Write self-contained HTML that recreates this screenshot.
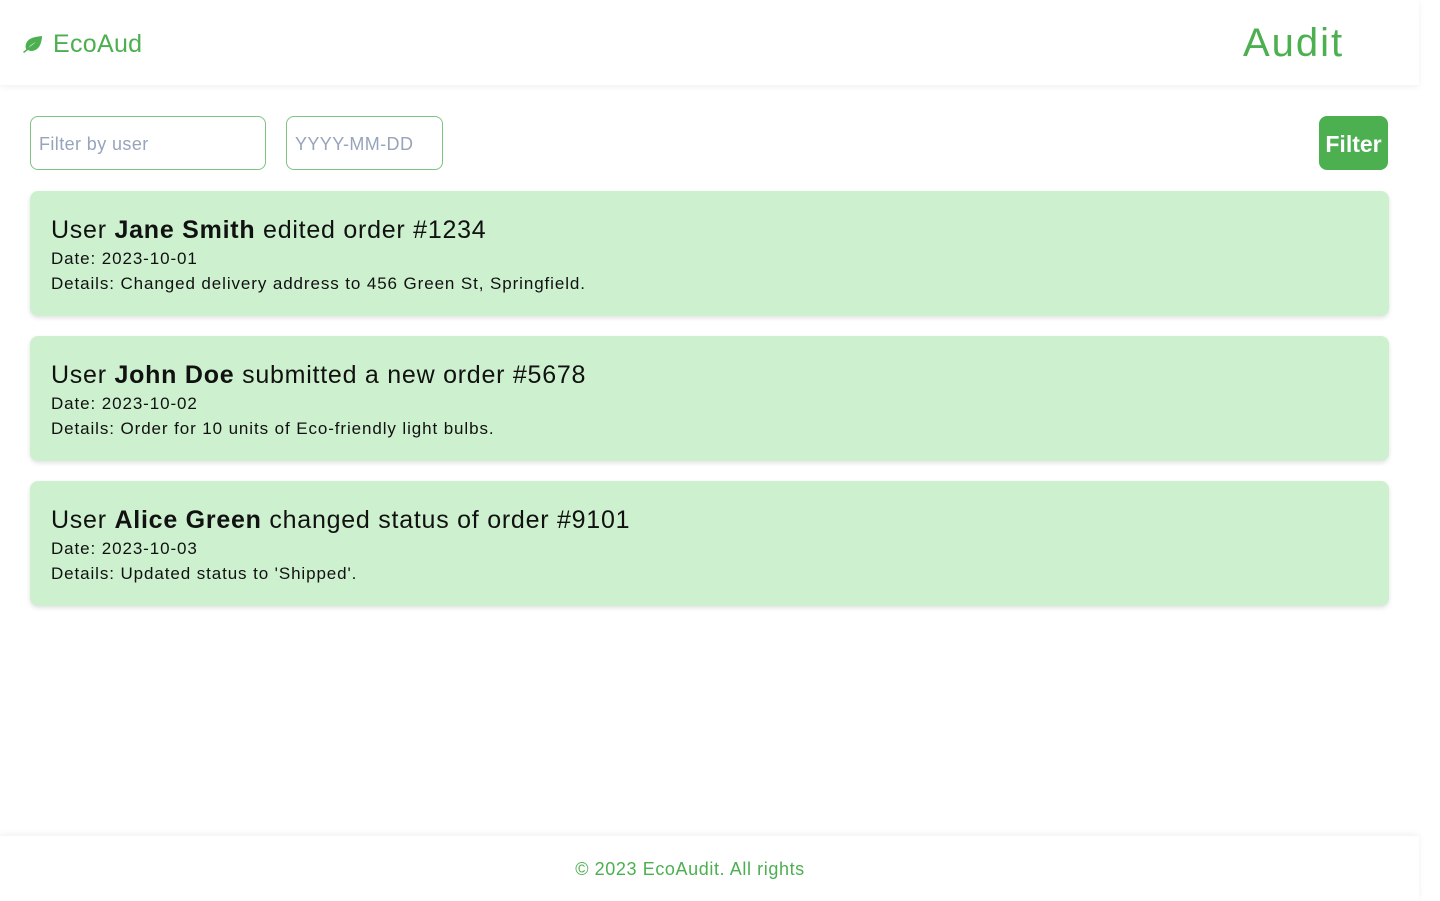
<!DOCTYPE html>
<html><head><style>
*{box-sizing:border-box;margin:0;padding:0}
body{width:1440px;height:901px;background:#fff;font-family:"Liberation Sans",sans-serif;position:relative;overflow:hidden}
.hdr{position:absolute;left:0;top:0;width:1419px;height:85px;background:#fff;box-shadow:0 2px 6px rgba(0,0,0,.06)}
.logo{position:absolute;left:22px;top:30px;color:#4caf50;font-size:25px;display:flex;align-items:center;gap:10px;letter-spacing:.3px}
.audit{position:absolute;left:1243px;top:21px;color:#4caf50;font-size:40px;letter-spacing:2px}
.inp{position:absolute;top:116px;height:54px;border:1px solid #7cc47f;border-radius:8px;color:#97a4bb;font-size:18px;padding:17px 8px;letter-spacing:.4px}
.btn{position:absolute;left:1319px;top:116px;width:69px;height:54px;background:#4caf50;border-radius:8px;color:#fff;font-size:23px;font-weight:bold;text-align:center;line-height:56px}
.card{position:absolute;left:30px;width:1359px;height:125px;background:#cdf0cf;border-radius:8px;box-shadow:0 2px 5px rgba(0,0,0,.12);padding:24px 21px}
.card h2{font-size:25px;font-weight:normal;color:#111;margin-bottom:1px;letter-spacing:.75px;line-height:30px}
.card p{font-size:17px;color:#111;line-height:25px;letter-spacing:.9px}
.ftr{position:absolute;left:0;top:836px;width:1380px;height:65px;text-align:center;color:#4caf50;font-size:18px;padding-top:23px;letter-spacing:.6px}
.fbg{position:absolute;left:0;top:836px;width:1419px;height:65px;background:#fff;box-shadow:0 -2px 6px rgba(0,0,0,.06)}
</style></head><body>
<div class="hdr">
<div class="logo"><svg width="21" height="17" viewBox="0 0 21 17"><path d="M20 0C12 1 6 2 4 8c-1 3 0 5 1 6C7 10 10 8 14 6 10 9 6 12 1 16l1 1 4-3c3 2 8 1 11-3 2-3 3-8 3-11z" fill="#4caf50"/></svg>EcoAud</div>
<div class="audit">Audit</div>
</div>
<div class="inp" style="left:30px;width:236px">Filter by user</div>
<div class="inp" style="left:286px;width:157px">YYYY-MM-DD</div>
<div class="btn">Filter</div>
<div class="card" style="top:191px"><h2>User <b>Jane Smith</b> edited order #1234</h2><p>Date: 2023-10-01</p><p>Details: Changed delivery address to 456 Green St, Springfield.</p></div>
<div class="card" style="top:336px"><h2>User <b>John Doe</b> submitted a new order #5678</h2><p>Date: 2023-10-02</p><p>Details: Order for 10 units of Eco-friendly light bulbs.</p></div>
<div class="card" style="top:481px"><h2>User <b>Alice Green</b> changed status of order #9101</h2><p>Date: 2023-10-03</p><p>Details: Updated status to 'Shipped'.</p></div>
<div class="fbg"></div>
<div class="ftr">© 2023 EcoAudit. All rights</div>
</body></html>
